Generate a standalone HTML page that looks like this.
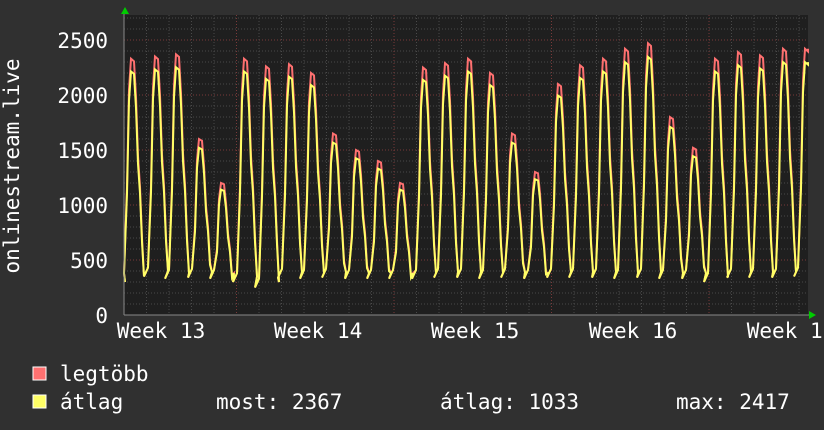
<!DOCTYPE html>
<html><head><meta charset="utf-8"><style>
body{margin:0;width:824px;height:430px;background:#303030;overflow:hidden}
svg{display:block}
text{font-family:"DejaVu Sans Mono","Liberation Mono",monospace;font-size:21px;fill:#fff}
</style></head><body>
<svg id="g" width="824" height="430" xmlns="http://www.w3.org/2000/svg">
<rect x="124" y="15" width="684" height="300" fill="#1f1f1f"/>
<g id="grid"></g>
<path id="pmax" fill="none" stroke="#ff7070" stroke-width="2"/>
<path id="pavg" fill="none" stroke="#ffff66" stroke-width="2"/>
<line x1="124" y1="315" x2="812" y2="315" stroke="#888" stroke-width="1"/>
<line x1="124" y1="315" x2="124" y2="11" stroke="#888" stroke-width="1"/>
<polygon points="121,14 125,7 129,14" fill="#0c0"/>
<polygon points="809,311 816,315 809,319" fill="#0c0"/>
<text x="108" y="48" text-anchor="end">2500</text>
<text x="108" y="103" text-anchor="end">2000</text>
<text x="108" y="158" text-anchor="end">1500</text>
<text x="108" y="213" text-anchor="end">1000</text>
<text x="108" y="268" text-anchor="end">500</text>
<text x="108" y="323" text-anchor="end">0</text>
<text x="161" y="338" text-anchor="middle">Week 13</text>
<text x="318" y="338" text-anchor="middle">Week 14</text>
<text x="475" y="338" text-anchor="middle">Week 15</text>
<text x="633" y="338" text-anchor="middle">Week 16</text>
<text x="791" y="338" text-anchor="middle">Week 17</text>
<text transform="translate(19,166) rotate(-90)" text-anchor="middle">onlinestream.live</text>
<rect x="33" y="367" width="13" height="13" fill="#ff7070" stroke="#fff" stroke-width="1"/>
<rect x="33" y="395" width="13" height="13" fill="#ffff66" stroke="#fff" stroke-width="1"/>
<text x="60" y="381">legtöbb</text>
<text x="60" y="409">átlag</text>
<text x="216" y="409">most: 2367</text>
<text x="440" y="409">átlag: 1033</text>
<text x="676" y="409">max: 2417</text>
</svg>
<script>
var g=document.getElementById("grid"),h="";
for(var v=100;v<2800;v+=100){var y=315-v*0.11;if(y<15)break;
h+='<line x1="124" x2="808" y1="'+y+'" y2="'+y+'" stroke="'+(v%500==0?'#7a3a3a':'#4a4a4a')+'" stroke-dasharray="1,2"/>';}
for(var x=124+22.5;x<808;x+=22.5){var maj=Math.abs(((x-235)/157.5)-Math.round((x-235)/157.5))<0.02;
h+='<line y1="15" y2="315" x1="'+x+'" x2="'+x+'" stroke="'+(maj?'#7a3a3a':'#4a4a4a')+'" stroke-dasharray="1,2"/>';}
g.innerHTML=h;
var P=[[133,2330],[157,2350],[178,2370],[201,1600],[223,1200],[246,2330],[268,2260],[291,2280],[313,2200],[335,1650],[358,1500],[380,1400],[402,1200],[425,2250],[447,2290],[470,2330],[492,2200],[514,1650],[537,1300],[560,2100],[582,2270],[605,2330],[627,2420],[650,2470],[672,1800],[695,1520],[717,2330],[740,2390],[762,2360],[785,2420],[807,2420]];
var T=[300,350,330,340,330,300,250,340,330,340,330,330,330,330,340,340,330,340,330,340,340,340,330,340,330,330,300,340,340,340,350];
function Y(v){return 315-v*0.11}
function build(k){var pts=[];
for(var i=0;i<P.length;i++){var px=P[i][0],pv=P[i][1]*k,t=T[i];
if(i>0){pts.push([px-13,t]);}
pts.push([px-9,t+80],[px-6,pv*0.5],[px-4,pv*0.88],[px-2,pv],[px+1,pv*0.99],[px+3,pv*0.85],[px+5,pv*0.62],[px+7,pv*0.5],[px+9,pv*0.3],[px+11,t+50]);}
var d="M125,"+Y(T[0]);
for(var j=0;j<pts.length;j++){if(pts[j][0]>808){d+=" L808,"+Y(P[P.length-1][1]*k).toFixed(1);break;}d+=" L"+pts[j][0]+","+Y(pts[j][1]).toFixed(1);}
return d;}
document.getElementById("pmax").setAttribute("d",build(1));
document.getElementById("pavg").setAttribute("d",build(0.95));
</script>
</body></html>
